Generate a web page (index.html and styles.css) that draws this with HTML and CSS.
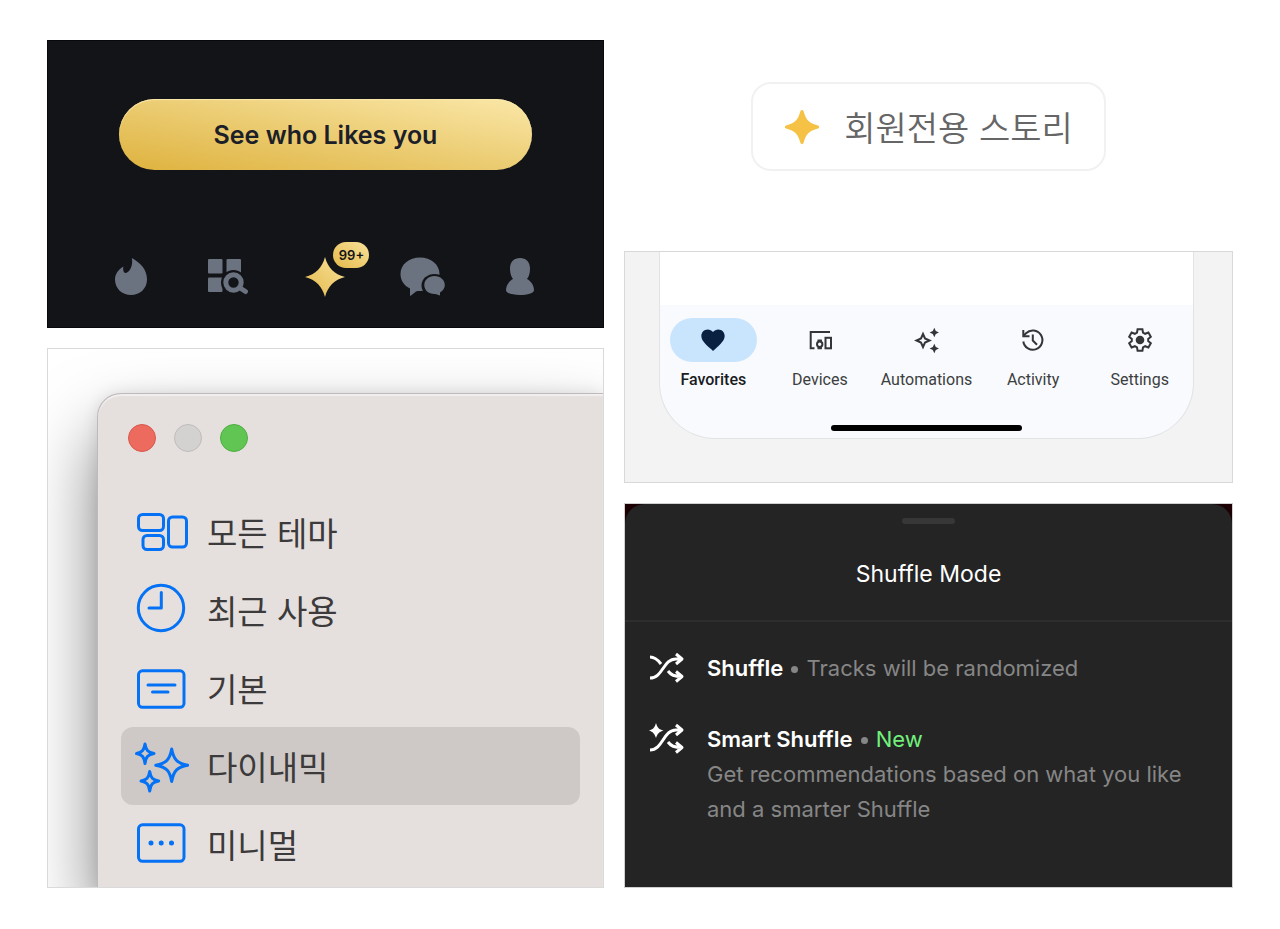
FILE: index.html
```html
<!DOCTYPE html>
<html lang="ko">
<head>
  <meta charset="UTF-8" />
  <meta name="viewport" content="width=device-width, initial-scale=1.0"/>
  <title>Sparkle icons</title>
  <link rel="stylesheet" href="styles.css">
</head>
<body>

  <main class="board">
    <div class="column">

      <section class="dating">
        <button class="likes-button">See who Likes you</button>
        <nav class="dating-nav">
          <a href="#" aria-label="Home">
            <svg width="36" height="40" viewBox="0 0 36 40"><path d="M18.8 1C28 6 34 13 34 22.5C34 31.5 27 38 18 38S2 31.5 2 22.5C2 17 5.500 12.5 10.3 9.5C9.8 12.5 10.5 15.5 12 16C16.5 16 20.5 8.5 18.8 1Z"/></svg>
          </a>
          <a href="#" aria-label="Explore">
            <svg width="42" height="40" viewBox="0 -1 42 40">
              <rect x="1" y="1" width="14.5" height="14.5" rx="1"/>
              <rect x="19.5" y="1" width="14.5" height="14.5" rx="1"/>
              <rect x="1" y="19.5" width="14.5" height="14.5" rx="1"/>
              <circle class="cut" cx="26.5" cy="24.5" r="12.5"/>
              <circle class="ring" cx="26.5" cy="24.5" r="7.7"/>
              <path class="ring" d="M33 30L38.5 33.5"/>
            </svg>
          </a>
          <a href="#" class="likes-link" aria-label="Likes">
            <svg width="40" height="40" viewBox="0 0 40 40">
              <defs>
                <linearGradient id="gold" x1="0" y1="1" x2="1" y2="0">
                  <stop offset="0" stop-color="#e3b94a"/>
                  <stop offset="1" stop-color="#f9e29b"/>
                </linearGradient>
              </defs>
              <path fill="url(#gold)" d="M20 0C23 11 29 17 40 20C29 23 23 29 20 40C17 29 11 23 0 20C11 17 17 11 20 0Z"/>
            </svg>
            <span class="badge">99+</span>
          </a>
          <a href="#" aria-label="Messages">
            <svg width="46" height="40" viewBox="0 0 46 40">
              <path d="M20 0.5C31 0.5 39.5 7.5 39.5 17S31 34 20 34C18 34 17 34 16 34.5C14 36 12.5 37.5 10 39V31.5C4 28.5 0.5 23.5 0.5 17C0.5 7.5 9 0.5 20 0.5Z"/>
              <ellipse class="cut" cx="34.5" cy="28.5" rx="13" ry="11.5"/>
              <path d="M34.5 19C40.5 19 44.8 23 44.8 28C44.8 31 43 33.5 40 35.5V38.5L35.5 37C29 37.5 24.3 33.5 24.3 28C24.3 23 28.5 19 34.5 19Z"/>
            </svg>
          </a>
          <a href="#" aria-label="Profile">
            <svg width="30" height="40" viewBox="0 0 30 40"><path d="M15 1C21 1 25 5 25 11.5C25 16 24 19.5 22 22C26 24 29 28.5 29 33C29 36.5 22.5 38 15 38S1 36.5 1 33C1 28.5 4 24 8 22C6 19.5 5 16 5 11.5C5 5 9 1 15 1Z"/></svg>
          </a>
        </nav>
      </section>

      <section class="desktop">
        <div class="window">
          <div class="lights">
            <button class="light red" aria-label="Close"></button>
            <button class="light gray" aria-label="Minimize"></button>
            <button class="light green" aria-label="Zoom"></button>
          </div>
          <nav class="themes">
            <a href="#" class="theme">
              <svg width="54" height="54" viewBox="0 0 54 54">
                <rect x="3.5" y="9.5" width="25" height="16" rx="4"/>
                <rect x="8" y="30.5" width="20.5" height="14" rx="4"/>
                <rect x="33.5" y="12" width="18" height="30" rx="4"/>
              </svg>
              모든 테마
            </a>
            <a href="#" class="theme">
              <svg width="54" height="54" viewBox="0 0 54 54">
                <circle cx="26" cy="25" r="22.7"/>
                <path d="M26.3 9.5V25H14"/>
              </svg>
              최근 사용
            </a>
            <a href="#" class="theme">
              <svg width="54" height="54" viewBox="0 0 54 54">
                <rect x="3.5" y="9.8" width="45.5" height="36.5" rx="4"/>
                <path d="M13 24H40M17.5 31H33"/>
              </svg>
              기본
            </a>
            <a href="#" class="theme selected" aria-current="true">
              <svg width="54" height="54" viewBox="0 0 54 54">
                <path d="M36.7 10C38.5 20 42 24.5 52.7 26.2C42 28 38.5 32 36.7 42.5C34.9 32 31.5 28 20.7 26.2C31.5 24.5 34.9 20 36.7 10Z"/>
                <path d="M10 5C11 11.5 13 13.5 19 14.5C13 15.5 11 17.5 10 24.5C9 17.5 7 15.5 1.5 14.5C7 13.5 9 11.5 10 5Z"/>
                <path d="M14.7 32.5C15.7 39 17.7 41 23.7 42C17.7 43 15.7 45 14.7 52C13.7 45 11.7 43 6 42C11.7 41 13.7 39 14.7 32.5Z"/>
              </svg>
              다이내믹
            </a>
            <a href="#" class="theme">
              <svg width="54" height="54" viewBox="0 0 54 54">
                <rect x="3.5" y="7.8" width="45.5" height="36.5" rx="4"/>
                <path class="dots" d="M16 26h.01M26.2 26h.01M36.5 26h.01"/>
              </svg>
              미니멀
            </a>
          </nav>
        </div>
      </section>

    </div>
    <div class="column">

      <section class="story">
        <button class="story-button">
          <svg width="36" height="36" viewBox="0 0 36 36"><path d="M16.500 2C17 0.500 19 0.500 19.500 2C22 11 25 14 34 16.500C35.500 17 35.500 19 34 19.500C25 22 22 25 19.500 34C19 35.500 17 35.500 16.500 34C14 25 11 22 2 19.500C0.500 19 0.500 17 2 16.500C11 14 14 11 16.500 2Z"/></svg>
          회원전용 스토리
        </button>
      </section>

      <section class="home">
        <div class="phone">
          <nav class="home-nav">
            <a href="#" class="active" aria-current="page">
              <span class="pill">
                <svg width="28" height="28" viewBox="0 0 24 24"><path d="M12 21.35l-1.45-1.32C5.4 15.36 2 12.28 2 8.5 2 5.42 4.42 3 7.5 3c1.74 0 3.41.81 4.5 2.09C13.09 3.81 14.76 3 16.5 3 19.58 3 22 5.42 22 8.5c0 3.78-3.4 6.86-8.55 11.54L12 21.35z"/></svg>
              </span>
              Favorites
            </a>
            <a href="#">
              <span class="pill">
                <svg width="28" height="28" viewBox="0 0 28 28">
                  <path class="line" d="M24 6H4.7V22.3H8.5"/>
                  <circle class="line" cx="13.7" cy="18.3" r="2.7"/>
                  <path d="M11.5 13.4h4.4v2.2h-4.4zM11.5 21h4.4v2.2h-4.4z"/>
                  <rect class="line" x="19.5" y="11.8" width="5.5" height="10.5"/>
                </svg>
              </span>
              Devices
            </a>
            <a href="#">
              <span class="pill">
                <svg width="28" height="28" viewBox="0 0 28 28">
                  <path class="line" d="M11 8L13 12.5L17.5 14.5L13 16.5L11 21L9 16.5L4.5 14.5L9 12.5Z"/>
                  <path d="M22.3 1.8L23.8 5L27 6.5L23.8 8L22.3 11.2L20.8 8L17.6 6.5L20.8 5ZM22.3 17.8L23.8 21L27 22.5L23.8 24L22.3 27.2L20.8 24L17.6 22.5L20.8 21Z"/>
                </svg>
              </span>
              Automations
            </a>
            <a href="#">
              <span class="pill">
                <svg width="28" height="28" viewBox="0 0 28 28">
                  <path class="line" d="M4.3 15.5A9.6 9.6 0 1 0 7 7.3L4.5 9.8"/>
                  <path class="line" d="M4.3 4V10.2H10.5M13.8 8.5V14.5L18 18.8"/>
                </svg>
              </span>
              Activity
            </a>
            <a href="#">
              <span class="pill">
                <svg width="28" height="28" viewBox="0 0 28 28">
                  <path class="line" d="M11.6 3.2H16.4L17 6.5L19.2 7.8L22.4 6.6L24.8 10.8L22.2 12.9V15.1L24.8 17.2L22.4 21.4L19.2 20.2L17 21.5L16.4 24.8H11.6L11 21.5L8.8 20.2L5.6 21.4L3.2 17.2L5.8 15.1V12.9L3.2 10.8L5.6 6.6L8.8 7.8L11 6.5Z"/>
                  <circle cx="14" cy="14" r="4.3"/>
                </svg>
              </span>
              Settings
            </a>
          </nav>
          <div class="home-bar"></div>
        </div>
      </section>

      <section class="music">
        <div class="sheet">
          <div class="handle"></div>
          <h2>Shuffle Mode</h2>
          <div class="modes">
            <a href="#" class="mode">
              <svg width="36" height="34" viewBox="0 0 36 34">
                <path d="M1 27C14 27 14 8 27 8H33M27 3L33 8L27 13"/>
                <path d="M1 6C6 6 9 9 12 13M19 20C22 24 25 25.5 33 25.5M27 20.5L33 25.5L27 30.5"/>
              </svg>
              <p><strong>Shuffle</strong> <span class="dot"></span> Tracks will be randomized</p>
            </a>
            <a href="#" class="mode">
              <svg width="36" height="34" viewBox="0 0 36 34">
                <path d="M1 28C14 28 14 8 27 8H33M27 3L33 8L27 13"/>
                <path d="M19 20C22 24 25 25.5 33 25.5M27 20.5L33 25.5L27 30.5"/>
                <path class="spark" d="M7 1C8.500 6 10 7.500 14.500 8.500C10 10 8.500 11.500 7 16C5.500 11.500 4 10 0 8.500C4 7.500 5.500 6 7 1Z"/>
              </svg>
              <p><strong>Smart Shuffle</strong> <span class="dot"></span> <span class="new">New</span><br>
              Get recommendations based on what you like and a smarter Shuffle</p>
            </a>
          </div>
        </div>
      </section>

    </div>
  </main>

</body>
</html>
```
FILE: styles.css
```css
* {
  box-sizing: border-box;
}

body {
  margin: 0;
  background: #fff;
  font-family: Inter, "Noto Sans CJK KR", sans-serif;
}

a {
  color: inherit;
  text-decoration: none;
}

button {
  border: none;
  cursor: pointer;
}

svg {
  display: block;
  flex: none;
}

.board {
  display: grid;
  grid-template-columns: 557fr 609fr;
  gap: 20px;
  padding: 40px 47px;
}

.column {
  display: flex;
  flex-direction: column;
  gap: 20px;
  min-width: 0;
}

/* dating app */
.dating {
  padding: 58px 34px 30px;
  background: #131417;
  border: 1px solid #08090b;
  display: flex;
  flex-direction: column;
  gap: 87px;
}

.likes-button {
  height: 71px;
  margin: 0 37px;
  border-radius: 36px;
  background: linear-gradient(to top right, #deb23e, #edcf78 55%, #fae7a8);
  box-shadow: inset 0 1px 1px #fbe9ac;
  color: #1b2028;
  font-family: Inter, sans-serif;
  font-size: 25px;
  font-weight: 600;
}

.dating-nav {
  display: grid;
  grid-template-columns: repeat(5, 1fr);
  justify-items: center;
  fill: #6b7280;
}

.dating-nav .cut {
  fill: #131417;
}

.dating-nav .ring {
  fill: none;
  stroke: #6b7280;
  stroke-width: 5;
  stroke-linecap: round;
}

.likes-link {
  position: relative;
}

.badge {
  position: absolute;
  left: 28px;
  top: -15px;
  width: 36px;
  height: 26px;
  border-radius: 13px;
  background: linear-gradient(to top right, #e3b94a, #f9e29b);
  color: #131417;
  font-size: 13px;
  font-weight: 600;
  line-height: 26px;
  text-align: center;
}

/* desktop window */
.desktop {
  flex: 1;
  padding: 44px 0 0 49px;
  border: 1px solid #dadada;
  overflow: hidden;
}

.window {
  height: 100%;
  padding: 30px 23px 4px;
  border: 1px solid #bcbaba;
  border-width: 1px 0 0 1px;
  border-radius: 24px 0 0 0;
  background: #e5e0de;
  box-shadow: inset 0 2px 1px #f2efee, 0 40px 72px rgba(0, 0, 0, 0.5), 0 0 16px rgba(0, 0, 0, 0.1);
}

.lights {
  display: flex;
  gap: 18px;
  padding: 0 7px;
}

.light {
  width: 28px;
  height: 28px;
  padding: 0;
  border-radius: 50%;
}

.red {
  background: #ec6a5e;
  border: 1px solid #d8594e;
}

.gray {
  background: #d3d2d1;
  border: 1px solid #bfbdbc;
}

.green {
  background: #61c554;
  border: 1px solid #50ad43;
}

.themes {
  margin-top: 41px;
}

.theme {
  display: flex;
  align-items: center;
  gap: 18px;
  height: 78px;
  padding: 0 14px;
  border-radius: 12px;
  color: #3c3a3a;
  font-family: "Noto Sans CJK KR", sans-serif;
  font-size: 33px;
}

.theme svg {
  fill: none;
  stroke: #0572f5;
  stroke-width: 3;
  stroke-linecap: round;
  stroke-linejoin: round;
}

.theme .dots {
  stroke-width: 5;
}

.selected {
  background: #cec9c6;
}

/* membership story */
.story {
  height: 191px;
  padding-top: 42px;
  display: flex;
  align-items: flex-start;
  justify-content: center;
}

.story-button {
  display: flex;
  align-items: center;
  gap: 24px;
  height: 89px;
  padding: 0 31px;
  border: 2px solid #f1f1f1;
  border-radius: 20px;
  background: #fff;
  color: #666;
  font-family: "Noto Sans CJK KR", sans-serif;
  font-size: 34px;
  font-weight: 350;
}

.story-button svg {
  fill: #f5c246;
}

/* home app */
.home {
  height: 232px;
  padding: 0 38px 43px 34px;
  border: 1px solid #d9d9d9;
  background: #f3f3f3;
}

.phone {
  height: 100%;
  padding-top: 53px;
  border: 1px solid #e1e3e5;
  border-top: none;
  border-radius: 0 0 56px 56px;
  background: linear-gradient(#fff 53px, #f8fafd 53px);
}

.home-nav {
  display: grid;
  grid-template-columns: repeat(5, 1fr);
  padding-top: 13px;
  color: #3c3e40;
  font-family: Roboto, sans-serif;
  font-size: 16px;
  line-height: 20px;
}

.home-nav a {
  display: flex;
  flex-direction: column;
  align-items: center;
  gap: 8px;
}

.pill {
  display: flex;
  align-items: center;
  justify-content: center;
  width: 87px;
  height: 44px;
  border-radius: 22px;
}

.home-nav svg {
  fill: #333537;
}

.home-nav .line {
  fill: none;
  stroke: #333537;
  stroke-width: 2;
}

.home-nav .active {
  color: #1a1c1e;
  font-weight: 500;
}

.active .pill {
  background: #c8e5fd;
}

.home-nav .active svg {
  fill: #0a2142;
}

.home-bar {
  width: 191px;
  height: 6px;
  margin: 35px auto 0;
  border-radius: 3px;
  background: #000;
}

/* music app */
.music {
  flex: 1;
  border: 1px solid #d0d0d0;
  background: #1c0004;
}

.sheet {
  height: 100%;
  padding-top: 14px;
  border-radius: 20px 20px 0 0;
  background: #242424;
  color: #868686;
}

.handle {
  width: 53px;
  height: 6px;
  margin: 0 auto;
  border-radius: 3px;
  background: #373737;
}

.sheet h2 {
  margin: 0;
  padding: 32px 0 28px;
  border-bottom: 2px solid #2e2e2e;
  color: #fff;
  font-size: 23px;
  font-weight: 400;
  line-height: 36px;
  text-align: center;
}

.modes {
  display: flex;
  flex-direction: column;
  gap: 36px;
  padding: 29px 24px;
}

.mode {
  display: flex;
  gap: 22px;
  font-size: 22px;
  line-height: 35px;
}

.mode p {
  margin: 0;
}

.mode strong {
  color: #fff;
  font-weight: 600;
}

.mode svg {
  fill: none;
  stroke: #fff;
  stroke-width: 3;
  stroke-linejoin: round;
}

.mode .spark {
  fill: #fff;
  stroke: none;
}

.dot {
  display: inline-block;
  width: 7px;
  height: 7px;
  margin: 0 2px;
  border-radius: 50%;
  background: #868686;
  vertical-align: 3px;
}

.new {
  color: #72f07c;
}
```
